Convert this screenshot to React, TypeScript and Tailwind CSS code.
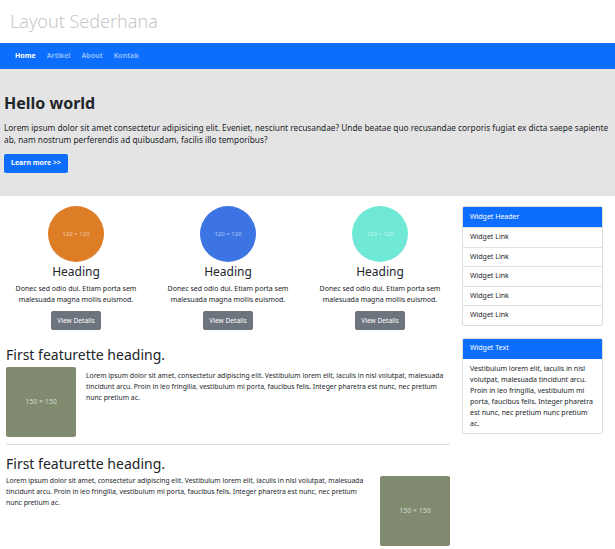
const circles = [
  { color: 'bg-[#dd7d26]' },
  { color: 'bg-[#3d74e3]' },
  { color: 'bg-[#70e8d6]' },
]

const featText =
  'Lorem ipsum dolor sit amet, consectetur adipiscing elit. Vestibulum lorem elit, iaculis in nisl volutpat, malesuada tincidunt arcu. Proin in leo fringilla, vestibulum mi porta, faucibus felis. Integer pharetra est nunc, nec pretium nunc pretium ac.'

function Placeholder() {
  return (
    <div className="w-[70px] h-[70px] shrink-0 bg-[#7f8a6e] rounded-[2px] flex items-center justify-center text-[7px] text-[#d6dacd]">
      150 × 150
    </div>
  )
}

export default function App() {
  return (
    <div className="w-[615px] h-[549px] overflow-hidden bg-white text-[#212529]" style={{ fontFamily: '"Noto Sans", "Open Sans", sans-serif' }}>
      {/* Header */}
      <div className="h-[43px] flex items-center pl-[10px]">
        <h1 className="text-[18px] text-[#c8c8c8] font-light">Layout Sederhana</h1>
      </div>

      {/* Nav */}
      <nav className="h-[26px] bg-[#0d6efd] flex items-center pl-[15px] gap-[11px] text-[7px] font-bold">
        <span className="text-white">Home</span>
        <span className="text-[#8cbcfe]">Artikel</span>
        <span className="text-[#8cbcfe]">About</span>
        <span className="text-[#8cbcfe]">Kontak</span>
      </nav>

      {/* Jumbotron */}
      <div className="h-[127px] bg-[#e4e4e4] px-[4px] pt-[23px]">
        <h2 className="text-[16px] font-bold leading-[22px]">Hello world</h2>
        <p className="mt-[8px] text-[8.3px] leading-[12px]">
          Lorem ipsum dolor sit amet consectetur adipisicing elit. Eveniet, nesciunt recusandae? Unde beatae quo recusandae corporis fugiat ex dicta saepe sapiente ab, nam nostrum perferendis ad quibusdam, facilis illo temporibus?
        </p>
        <button className="mt-[8px] h-[19px] px-[7px] bg-[#0d6efd] text-white text-[7px] font-bold rounded-[2px]">
          Learn more &gt;&gt;
        </button>
      </div>

      <div className="flex pt-[10px]">
        {/* Left */}
        <div className="w-[456px]">
          <div className="grid grid-cols-3">
            {circles.map((c, i) => (
              <div key={i} className="flex flex-col items-center">
                <div className={`w-[56px] h-[56px] rounded-full ${c.color} flex items-center justify-center text-[6px] text-white/60`}>
                  120 × 120
                </div>
                <h3 className="text-[12px] leading-[17px] mt-[1px]">Heading</h3>
                <p className="text-[7px] leading-[11px] text-center mt-[3px] w-[130px]">
                  Donec sed odio dui. Etiam porta sem malesuada magna mollis euismod.
                </p>
                <button className="mt-[6px] h-[19px] px-[6px] bg-[#6c757d] text-white text-[6.6px] rounded-[2px]">
                  View Details
                </button>
              </div>
            ))}
          </div>

          <div className="px-[6px]">
            <h3 className="mt-[15px] text-[14px] leading-[20px]">First featurette heading.</h3>
            <div className="flex gap-[10px] mt-[2px]">
              <Placeholder />
              <p className="text-[6.8px] leading-[11px] pt-[3px]">{featText}</p>
            </div>
            <hr className="mt-[7px] border-t border-[#dedede]" />
            <h3 className="mt-[9px] text-[14px] leading-[20px]">First featurette heading.</h3>
            <div className="flex gap-[10px]">
              <p className="text-[6.8px] leading-[11px] pt-[1px]">{featText}</p>
              <div className="mt-[2px]">
                <Placeholder />
              </div>
            </div>
          </div>
        </div>

        {/* Sidebar */}
        <div className="ml-[6px] w-[141px]">
          <div className="border border-[#dcdcdc] rounded-[2px] overflow-hidden">
            <div className="h-[20px] bg-[#0d6efd] text-white text-[7px] flex items-center px-[7px]">Widget Header</div>
            {[0, 1, 2, 3, 4].map((i) => (
              <div key={i} className="h-[19.5px] border-t border-[#e2e2e2] text-[7px] flex items-center px-[7px]">
                Widget Link
              </div>
            ))}
          </div>
          <div className="mt-[12px] border border-[#dcdcdc] rounded-[2px] overflow-hidden">
            <div className="h-[20px] bg-[#0d6efd] text-white text-[7px] flex items-center px-[7px]">Widget Text</div>
            <p className="px-[7px] py-[4px] text-[7px] leading-[11px]">
              Vestibulum lorem elit, iaculis in nisl volutpat, malesuada tincidunt arcu. Proin in leo fringilla, vestibulum mi porta, faucibus felis. Integer pharetra est nunc, nec pretium nunc pretium ac.
            </p>
          </div>
        </div>
      </div>
    </div>
  )
}
